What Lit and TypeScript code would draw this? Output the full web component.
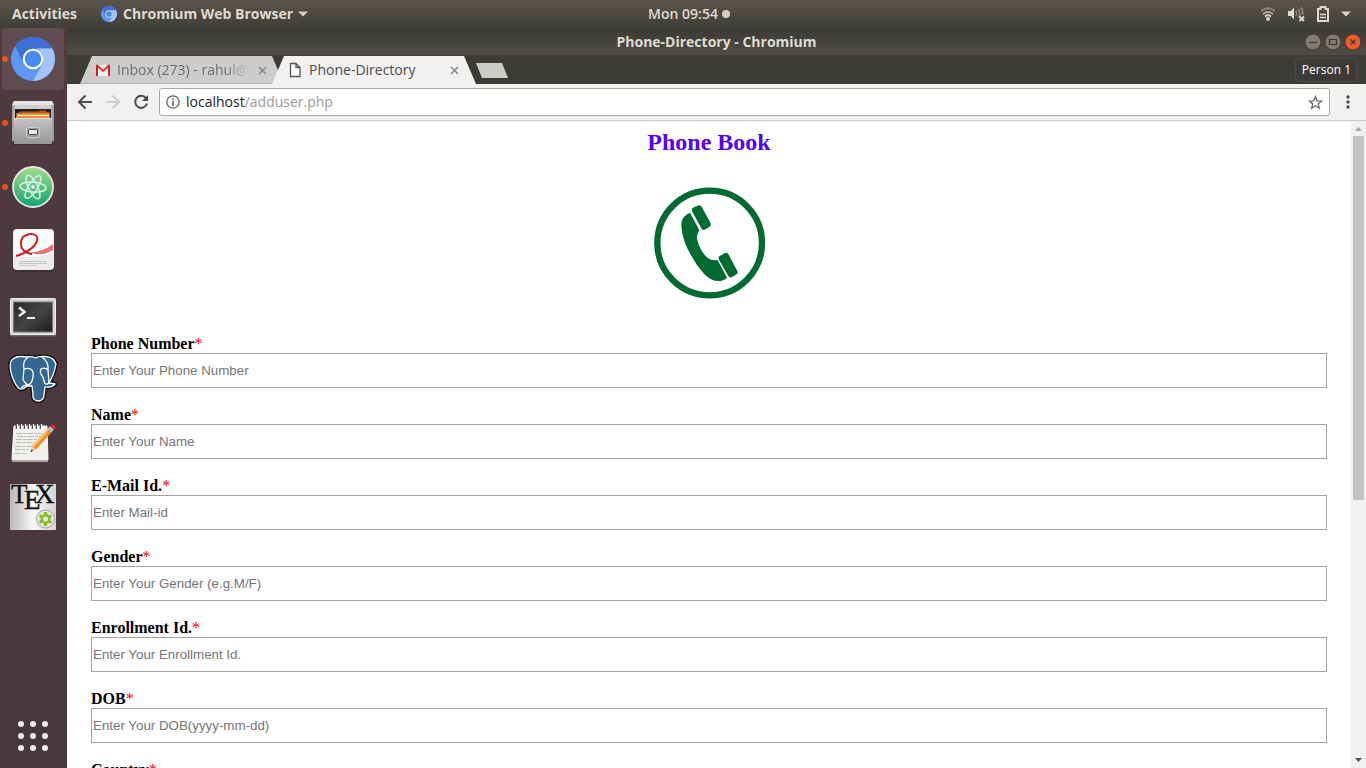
import { LitElement, html, css, svg } from "lit";
import { customElement } from "lit/decorators.js";
import { classMap } from "lit/directives/class-map.js";

const chromiumMark = svg`
  <circle cx="31" cy="31" r="22" fill="#5f97f6"/>
  <path d="M13 18A22 22 0 0 1 50.200 20.500H31L20.500 31z" fill="#3d6fd6"/>
  <path d="M13 18 22.500 37 31 31 20.500 28z" fill="#3f70cc"/>
  <path d="M50.200 20.500A22 22 0 0 1 31 53L40.500 36 41 26 35 20.500z" fill="#a3c3fb"/>
  <circle cx="31" cy="31" r="9.300" fill="#4a8af4" stroke="#fff" stroke-width="2"/>`;

const filesIcon = svg`
  <path d="M11 50H51V53H11z" fill="#2f2629" opacity=".6"/>
  <path d="M10 13 12 9H50L52 13V49H10z" fill="url(#metal)"/>
  <path d="M10 13 12 9H50L52 13z" fill="#e4e4e2"/>
  <path d="M13 17H49V28H13z" fill="#25211f"/>
  <path d="M16 20.500H18L19 19.500H37L38 18.500H44V20H47V28H16z" fill="#c9540f"/>
  <path d="M14 21.500H48V23H14z" fill="#f19a3a"/>
  <path d="M15 23H47V24H15z" fill="#fff6dc"/>
  <path d="M14 24H48V28H14z" fill="#e88d33"/>
  <path d="M12 26H50V52H12z" fill="url(#drawer)"/>
  <path d="M12 26.500H50" stroke="#dcdcda"/>
  <rect x="24.500" y="35.500" width="13" height="10" rx="1.500" fill="#9a9a99" stroke="#cfcfce"/>
  <rect x="26.500" y="37.500" width="9" height="5" rx="1" fill="#e8e8e8" stroke="#444"/>`;

const atomIcon = svg`
  <circle cx="31" cy="31" r="20" fill="url(#atomGreen)" stroke="#e4e8e4" stroke-width="1.800"/>
  <g fill="none" stroke="#d8f3e5" stroke-width="1.500">
    <ellipse cx="31" cy="31" rx="13" ry="5" transform="rotate(5 31 31)"/>
    <ellipse cx="31" cy="31" rx="13" ry="4.500" transform="rotate(64 31 31)"/>
    <ellipse cx="31" cy="31" rx="13" ry="4.500" transform="rotate(122 31 31)"/>
  </g>
  <circle cx="31" cy="31" r="1.800" fill="#fff"/>`;

const documentIcon = svg`
  <rect x="11" y="11" width="41" height="41" rx="4" fill="#2e2427" opacity=".5"/>
  <rect x="11" y="9" width="41" height="41" rx="4" fill="#ececec"/>
  <path d="M12 36V14Q12 10 16 10H47Q51 10 51 14V32C39 38 28 37 12 36z" fill="#fff"/>
  <path d="M28 32.500Q41 32 51 24V30Q40 37 28 32.500z" fill="#e57070"/>
  <path d="M14 36C25 33 37 25 35 17C33 12 20 13 19 22C18 29 23 33 30 34" fill="none" stroke="#cb2022" stroke-width="2"/>
  <path d="M17 41.500H45M17 43.500H45M17 45.500H35" stroke="#c6c6c6"/>`;

const terminalIcon = svg`
  <rect x="8" y="14.500" width="46" height="38" rx="1" fill="#777" opacity=".7"/>
  <rect x="8.500" y="14.500" width="45" height="36" rx="1" fill="#d5d5d3" stroke="#efefee"/>
  <rect x="11.500" y="18" width="39" height="30" fill="url(#screen)" stroke="#777"/>
  <path d="M17 23.500 22.500 28 17 32" fill="none" stroke="#f2f2f2" stroke-width="2.500"/>
  <path d="M25 34H33" stroke="#f2f2f2" stroke-width="2"/>`;

const elephantOutline =
  "M25 9Q13 7 9 13Q7 19 10 28Q14 39 18 41Q21 42 25 38L30 38Q31 44 31 49Q32 53 37 53Q42 52 42 47L43 39Q50 40 53 36L47 35Q52 27 54 16Q52 9 43 8.500Q36 8 34 10Q29 8 25 9z";
const elephantIcon = svg`
  <g stroke-linejoin="round" stroke-width="4" stroke="#111"><path d=${elephantOutline}/></g>
  <g stroke="#fff" stroke-width="1.300" stroke-linejoin="round" fill="#336791">
    <path d=${elephantOutline}/>
    <path d="M26 9.500Q20 13 22 21L21 31Q23 36 27 37Q32 33 31 24Q29 19 22 21M40 9Q47 14 46 22L47 35Q43 38 42 33L41 29Q37 25 39 21Q43 19 46 22M19 40Q23 36 27 37" fill="none"/>
  </g>`;

const notesIcon = svg`
  <path d="M10 47 12 14H45L46 47Q46 49 44 49H12Q10 49 10 47z" fill="#f0f0ed" stroke="#fafaf8"/>
  <path d="M10 48H46V50H10z" fill="#aaa6a7"/>
  <g stroke="#b9b9b9" stroke-dasharray="6 1 3 1"><path d="M14 21.500H40M15 24.500H42M14 27.500H37M14 30.500H33M13 34.500H30M13 37.500H27M13 41.500H25"/></g>
  <g fill="none" stroke="#3b3637" stroke-width="1.500"><path d="M14.500 17V13M18.500 17V13M22.500 17V13M26.500 17V13M30.500 17V13M34.500 17V13M38.500 17V13"/></g>
  <g stroke="#fff" stroke-width="1.300"><path d="M15.500 17V12M19.500 17V12M23.500 17V12M27.500 17V12M31.500 17V12M35.500 17V12M39.500 17V12"/></g>
  <path d="M28.500 40 30 34 34 37.500z" fill="#e9c899"/>
  <path d="M28.500 40 29.300 37.500 31 39z" fill="#222"/>
  <path d="M30 34 45 17 49 21 34 37.500z" fill="#ee922a"/>
  <path d="M30 34 45 17 46.500 18.500 31.500 35.500z" fill="#ffc575"/>
  <path d="M45 17 48 14 52 17.500 49 21z" fill="#b8bcc2"/>
  <path d="M48 14Q51 11.500 53.500 14Q55 16 52 17.500z" fill="#d9272d"/>`;

const texIcon = svg`
  <rect x="8" y="8" width="46" height="46" fill="url(#paper)"/>
  <text class="tex" x="9 22 33" y="27 33 27">TEX</text>
  <circle cx="43.500" cy="43" r="9" fill="#e6e6e3" stroke="#a5a5a2"/>
  <circle cx="43.500" cy="43" r="3.800" fill="none" stroke="#86bf2a" stroke-width="2.500"/>
  <path d="M43.500 36V39M43.500 47V50M37.500 39.500 40.500 41.300M46.500 44.700 49.500 46.500M37.500 46.500 40.500 44.700M46.500 41.300 49.500 39.500" stroke="#86bf2a" stroke-width="3"/>`;

const dockItems = [
  { name: "Chromium Web Browser", art: chromiumMark, running: true, active: true },
  { name: "Files", art: filesIcon, running: true, active: false },
  { name: "Atom", art: atomIcon, running: true, active: false },
  { name: "Document Viewer", art: documentIcon, running: false, active: false },
  { name: "Terminal", art: terminalIcon, running: false, active: false },
  { name: "pgAdmin", art: elephantIcon, running: false, active: false },
  { name: "Text Editor", art: notesIcon, running: false, active: false },
  { name: "TeX", art: texIcon, running: false, active: false },
];

@customElement("top-panel")
export class TopPanel extends LitElement {
  static styles = css`
    :host {
      display: grid;
      grid-template-columns: 1fr auto 1fr;
      align-items: center;
      height: 28px;
      padding: 0 12px;
      box-sizing: border-box;
      background: linear-gradient(#5a564d, #3f3e39);
      color: #dfdbd2;
      font: 600 14px/26px "Open Sans", "Noto Sans", sans-serif;
    }
    button {
      display: flex;
      align-items: center;
      gap: 6px;
      padding: 0;
      border: 0;
      background: none;
      color: inherit;
      font: inherit;
    }
    .left { display: flex; gap: 24px; font-weight: 700; }
    .clock { gap: 4px; padding-left: 12px; }
    .right { justify-self: end; gap: 12px; padding-right: 3px; }
    svg { display: block; flex: none; }
    .caret { margin-left: -1px; }
  `;
  render() {
    return html`
      <div class="left">
        <button>Activities</button>
        <button>
          <svg width="16" height="16" viewBox="9 9 44 44">${chromiumMark}</svg>
          <span>Chromium Web Browser</span>
          <svg class="caret" width="10" height="6"><path d="M0 0.500H10L5 5.500z" fill="#d6d2ca"/></svg>
        </button>
      </div>
      <button class="clock">Mon 09:54 <svg width="8" height="8"><circle cx="4" cy="4" r="4" fill="#d0cdc6"/></svg></button>
      <button class="right" aria-label="System menu">
        <svg width="16" height="16" fill="none" stroke-width="1.800">
          <path d="M1 5Q8 -0.500 15 5" stroke="#88857e"/><path d="M3 8Q8 4 13 8" stroke="#aaa79f"/>
          <path d="M5 10.500Q8 8 11 10.500" stroke="#d6d2ca"/><circle cx="8" cy="13" r="2" fill="#d6d2ca"/>
        </svg>
        <svg width="17" height="16">
          <path d="M0 5H3L6 1.500V13.500L3 10H0z" fill="#dedad2"/>
          <path d="M8 5Q9.500 7.500 8 10M10.500 3Q13 7.500 10.500 11.500M13 1.500Q15.500 5 14.500 9" fill="none" stroke="#8d8a83" stroke-width="1.500"/>
          <path d="M11.500 10.500 16 15M16 10.500 11.500 15" stroke="#dedad2" stroke-width="2"/>
        </svg>
        <svg width="12" height="16"><path d="M3.500 3V1H8.500V3H11V15H1V3z" fill="none" stroke="#dedad2" stroke-width="2"/><path d="M3 8.500H9M3 11.500H9" stroke="#dedad2" stroke-width="1.500"/></svg>
        <svg width="10" height="6"><path d="M0 0.500H10L5 5.500z" fill="#d6d2ca"/></svg>
      </button>`;
  }
}

@customElement("app-dock")
export class AppDock extends LitElement {
  static styles = css`
    :host {
      display: flex;
      flex-direction: column;
      justify-content: space-between;
      width: 67px;
      flex: none;
      box-sizing: border-box;
      padding: 0 0 14px 2px;
      background: linear-gradient(160deg, #503b3f, #4b393e 50%, #46383c);
    }
    .list { display: flex; flex-direction: column; gap: 2px; }
    button {
      position: relative;
      width: 62px;
      padding: 0;
      border: 0;
      border-radius: 4px;
      background: none;
    }
    .active { background: #604c51; }
    .running::before {
      content: "";
      position: absolute;
      left: 0;
      top: 28px;
      width: 6px;
      height: 6px;
      border-radius: 3px;
      background: #e95420;
    }
    svg { display: block; }
    .tex { font: 27px "Liberation Serif", serif; fill: #111; stroke: #111; stroke-width: 0.4px; }
  `;
  render() {
    return html`
      <div class="list">
        ${dockItems.map(
          (item) => html`<button aria-label=${item.name} class=${classMap({ active: item.active, running: item.running })}>
            <svg width="62" height="62">
              <defs>
                <linearGradient id="metal"><stop stop-color="#979795"/><stop offset=".1" stop-color="#cfcfcd"/><stop offset=".9" stop-color="#cfcfcd"/><stop offset="1" stop-color="#8d8d8b"/></linearGradient>
                <linearGradient id="drawer" x2="0" y2="1"><stop stop-color="#c4c4c3"/><stop offset="1" stop-color="#969695"/></linearGradient>
                <linearGradient id="atomGreen" x2="0" y2="1"><stop stop-color="#a5dc8c"/><stop offset="1" stop-color="#0fa56f"/></linearGradient>
                <linearGradient id="screen" x2="1" y2="1"><stop stop-color="#282828"/><stop offset=".5" stop-color="#444"/><stop offset="1" stop-color="#1d1d1d"/></linearGradient>
                <linearGradient id="paper" x2="1"><stop stop-color="#b9b9b9"/><stop offset=".5" stop-color="#f7f7f7"/><stop offset="1" stop-color="#d4d4d4"/></linearGradient>
              </defs>
              ${item.art}
            </svg>
          </button>`
        )}
      </div>
      <button aria-label="Show Applications">
        <svg width="62" height="36" fill="#eeecea">
          ${[6, 18, 30].map((y) => [19, 31, 43].map((x) => svg`<circle cx=${x} cy=${y} r="3"/>`))}
        </svg>
      </button>`;
  }
}

@customElement("browser-chrome")
export class BrowserChrome extends LitElement {
  static styles = css`
    :host { display: block; flex: none; font-family: "Open Sans", "Noto Sans", sans-serif; }
    svg { display: block; flex: none; }
    button { padding: 0; border: 0; background: none; font: inherit; color: inherit; }
    .title {
      display: grid;
      grid-template-columns: 1fr auto 1fr;
      align-items: center;
      height: 27px;
      background: linear-gradient(#3b3a36, #504d46);
      color: #dfdbd2;
      font-size: 14px;
      line-height: 26px;
      font-weight: 700;
    }
    .title span { grid-column: 2; }
    .controls { display: flex; gap: 4px; justify-self: end; padding-right: 5px; }
    .strip {
      display: flex;
      align-items: flex-end;
      height: 29px;
      padding: 0 8px 0 13px;
      background: #3c3b37;
    }
    .tab {
      display: flex;
      align-items: center;
      box-sizing: border-box;
      width: 204px;
      height: 28px;
      padding: 0 17px 0 15px;
      gap: 6px;
      clip-path: polygon(12px 0, 192px 0, 204px 100%, 0 100%);
      background: #cfcdcc;
      box-shadow: inset 0 -1px #b3b1af;
      color: #6e6c6a;
      font-size: 14px;
      line-height: 28px;
    }
    .tab.current { margin-left: -12px; background: #f2f1f0; box-shadow: none; color: #4c4c4c; }
    .tab span { flex: 1; overflow: hidden; white-space: nowrap; }
    .tab .fade { -webkit-mask-image: linear-gradient(90deg, #000 108px, transparent 134px); }
    .add { align-self: center; }
    .person {
      align-self: center;
      margin-left: auto;
      padding: 0 6px;
      border: 1px solid #4a4944;
      border-radius: 4px;
      color: #fff;
      font-size: 12px;
      line-height: 22px;
    }
    .toolbar {
      display: flex;
      align-items: center;
      gap: 10px;
      height: 36px;
      padding: 0 14px 0 10px;
      border-bottom: 1px solid #cbcac9;
      background: #f2f1f0;
    }
    .nav { display: flex; gap: 12px; }
    .omnibox {
      display: flex;
      align-items: center;
      flex: 1;
      gap: 6px;
      box-sizing: border-box;
      height: 28px;
      padding: 0 6px;
      border: 1px solid #a9a8a7;
      border-radius: 3px;
      background: #fff;
      font-size: 14px;
      color: #999;
    }
    .url { flex: 1; line-height: 26px; }
    .host { color: #222; }
  `;
  render() {
    const close = svg`<path d="M1 1 8 8M8 1 1 8" stroke="#8a8886" stroke-width="1.500"/>`;
    return html`
      <div class="title">
        <span>Phone-Directory - Chromium</span>
        <div class="controls">
          ${[
            { label: "Minimize", fill: "#807d75", line: "M4 8.500H12" },
            { label: "Maximize", fill: "#807d75", line: "M4.500 5.500H11.500V10.500H4.500z" },
            { label: "Close", fill: "#ee5c2c", line: "M5.500 5.500 10.500 10.500M10.500 5.500 5.500 10.500" },
          ].map(
            (c) => html`<button aria-label=${c.label}><svg width="16" height="16">
              <circle cx="8" cy="8" r="7.800" fill=${c.fill} stroke="#34332f" stroke-width=".6"/>
              <path d=${c.line} fill="none" stroke="#393833" stroke-width="1.200"/></svg></button>`
          )}
        </div>
      </div>
      <div class="strip">
        <div class="tab">
          <svg width="16" height="12" viewBox="0 0 16 12"><path d="M1 1H15V12H1z" fill="#efefef"/><path d="M1.500 1 8 7 14.500 1" fill="none" stroke="#dd3a33" stroke-width="2"/><path d="M2 12V1M14 12V1" stroke="#cf1f26" stroke-width="2"/></svg>
          <span class="fade">Inbox (273) - rahul@</span>
          <button aria-label="Close tab"><svg width="9" height="9">${close}</svg></button>
        </div>
        <div class="tab current">
          <svg width="16" height="16"><path d="M3.500 1.500H9L13 5.500V14.500H3.500zM9 1.500V5.500H13" fill="#fff" stroke="#55524f" stroke-width="1.300"/></svg>
          <span>Phone-Directory</span>
          <button aria-label="Close tab"><svg width="9" height="9">${close}</svg></button>
        </div>
        <button class="add" aria-label="New tab"><svg width="32" height="16"><path d="M0 1H26L32 16H6z" fill="#cfcdcc"/></svg></button>
        <button class="person">Person 1</button>
      </div>
      <div class="toolbar">
        <div class="nav">
          <button aria-label="Back"><svg width="16" height="16" fill="none" stroke="#4d4c4b" stroke-width="2"><path d="M15 8H2.500M8.500 1.500 2 8 8.500 14.500"/></svg></button>
          <button aria-label="Forward"><svg width="16" height="16" fill="none" stroke="#cfcecd" stroke-width="2"><path d="M1 8H13.500M7.500 1.500 14 8 7.500 14.500"/></svg></button>
          <button aria-label="Reload"><svg width="16" height="16"><path d="M13 4.200A6 6 0 1 0 14 9.500" fill="none" stroke="#4d4c4b" stroke-width="2"/><path d="M15 1V7H9z" fill="#4d4c4b"/></svg></button>
        </div>
        <div class="omnibox">
          <svg width="14" height="14" fill="none" stroke="#5f5e5d"><circle cx="7" cy="7" r="6.200" stroke-width="1.300"/><path d="M7 6V11M7 3.200V5" stroke-width="1.600"/></svg>
          <span class="url"><span class="host">localhost</span>/adduser.php</span>
          <button aria-label="Bookmark"><svg width="15" height="15"><path d="M7.500 1.500 9.200 5.800 13.700 6 10.200 8.900 11.400 13.300 7.500 10.800 3.600 13.300 4.800 8.900 1.300 6 5.800 5.800z" fill="none" stroke="#6c6b6a" stroke-width="1.300"/></svg></button>
        </div>
        <button aria-label="Menu"><svg width="12" height="16" fill="#4d4c4b"><circle cx="8" cy="3" r="1.700"/><circle cx="8" cy="8" r="1.700"/><circle cx="8" cy="13" r="1.700"/></svg></button>
      </div>`;
  }
}

@customElement("phone-form")
export class PhoneForm extends LitElement {
  static styles = css`
    :host { display: block; overflow: hidden; flex: 1; background: #fff; }
    .page {
      display: flex;
      flex-direction: column;
      padding: 8px 24px;
      color: #000;
      font: 16px/18px "Liberation Serif", serif;
    }
    h1 { margin: 0 0 31px; text-align: center; font-size: 24px; line-height: 26px; color: #50f; }
    .logo { display: block; align-self: center; margin-bottom: 35px; }
    form { display: flex; flex-direction: column; gap: 18px; }
    .field { display: flex; flex-direction: column; }
    label { font-weight: 700; }
    .star { color: #f00; font-weight: 400; }
    input {
      box-sizing: border-box;
      width: 100%;
      height: 35px;
      margin: 0;
      padding: 1px;
      border: 1px solid #a3a3a3;
      font-family: "Liberation Sans", sans-serif;
    }
    input::placeholder { color: #757575; }
  `;
  fields = [
    ["phone", "Phone Number", "Enter Your Phone Number"],
    ["name", "Name", "Enter Your Name"],
    ["email", "E-Mail Id.", "Enter Mail-id"],
    ["gender", "Gender", "Enter Your Gender (e.g.M/F)"],
    ["enrollment", "Enrollment Id.", "Enter Your Enrollment Id."],
    ["dob", "DOB", "Enter Your DOB(yyyy-mm-dd)"],
    ["country", "Country", ""],
  ];
  render() {
    return html`<div class="page">
      <h1>Phone Book</h1>
      <svg class="logo" width="114" height="114" viewBox="66 198 342 342" fill="#006a31">
        <circle cx="239" cy="369" r="157" fill="none" stroke="#006a31" stroke-width="19"/>
        <path d="M189 263 206 256Q212 254 215 260L242 310Q245 316 239 320L224 329Q218 332 215 326L187 275Q183 267 189 263z"/>
        <path d="M180 278 208 331Q199 342 201 356Q207 385 226 407Q242 424 263 420L291 473Q280 483 265 483Q243 483 222 461Q188 424 165 369Q154 339 154 310Q156 288 180 278z"/>
        <path d="M269 408 285 399Q291 396 295 402L322 453Q326 459 320 463L306 471Q299 475 295 468L267 419Q263 412 269 408z"/>
      </svg>
      <form>
        ${this.fields.map(
          ([id, label, hint]) => html`<div class="field">
            <label for=${id}>${label}<span class="star">*</span></label>
            <input id=${id} name=${id} placeholder=${hint} />
          </div>`
        )}
      </form>
    </div>`;
  }
}

@customElement("app-root")
export class AppRoot extends LitElement {
  static styles = css`
    :host { display: flex; flex-direction: column; height: 100vh; overflow: hidden; }
    .desk { display: flex; flex: 1; min-height: 0; }
    .window { display: flex; flex-direction: column; flex: 1; min-width: 0; }
    .view { display: flex; flex: 1; min-height: 0; }
    .scroll { display: flex; flex-direction: column; width: 15px; background: #f1f1f1; }
    .track { flex: 1; padding: 0 2px; }
    .thumb { height: 59%; background: #c1c1c1; }
    svg { display: block; }
  `;
  render() {
    return html`
      <top-panel></top-panel>
      <div class="desk">
        <app-dock></app-dock>
        <div class="window">
          <browser-chrome></browser-chrome>
          <div class="view">
            <phone-form></phone-form>
            <div class="scroll">
              <svg width="15" height="15"><path d="M4 10 7.500 6 11 10z" fill="#a3a3a3"/></svg>
              <div class="track"><div class="thumb"></div></div>
              <svg width="15" height="15"><path d="M4 5 7.500 9 11 5z" fill="#505050"/></svg>
            </div>
          </div>
        </div>
      </div>`;
  }
}
